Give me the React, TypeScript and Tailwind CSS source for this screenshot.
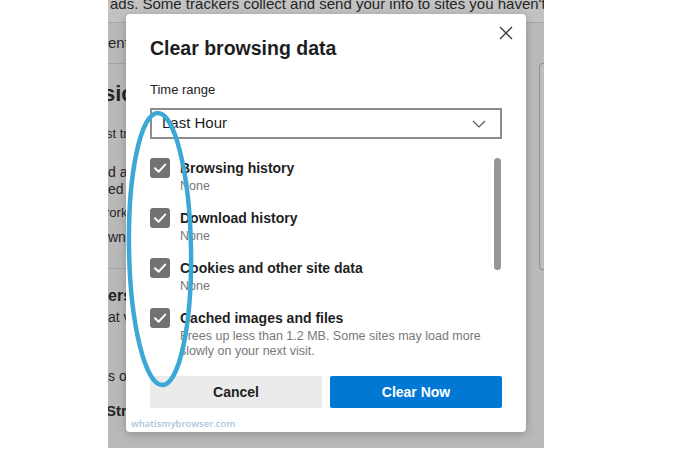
import React from "react";

const Check = () => (
  <svg width="20" height="20" viewBox="0 0 20 20" className="block">
    <path d="M5 10.2 L8.6 13.8 L15.2 6.6" fill="none" stroke="#ffffff" strokeWidth="2" strokeLinecap="round" strokeLinejoin="round" />
  </svg>
);

function Item({ label, sub, last }: { label: string; sub: React.ReactNode; last?: boolean }) {
  return (
    <div className={`flex gap-[10px] ${last ? "" : "h-[50px]"}`}>
      <div className="w-[20px] h-[20px] rounded-[3px] bg-[#727272] shrink-0">
        <Check />
      </div>
      <div className="flex flex-col">
        <div className="text-[14px] leading-[20px] font-semibold text-[#1f1f1f]">{label}</div>
        <div className="text-[12.5px] leading-[15px] text-[#787878] mt-[1px]">{sub}</div>
      </div>
    </div>
  );
}

export default function App() {
  return (
    <div className="relative w-[700px] h-[450px] bg-white overflow-hidden" style={{ fontFamily: '"Liberation Sans", Arial, sans-serif' }}>
      <div className="relative ml-[108px] w-[436px] h-[448px] bg-[#b9b9b9] overflow-hidden">
        {/* background page */}
        <div className="h-[23px] bg-[#c2c2c2] border-b border-[#a8a8a8] overflow-hidden">
          <div className="pl-[2px] mt-[-6px] text-[15px] leading-[20px] text-[#262626] whitespace-nowrap">
            ads. Some trackers collect and send your info to sites you haven't v
          </div>
        </div>
        <div className="flex justify-between">
          <div className="w-[120px] flex flex-col text-[#262626] whitespace-nowrap overflow-hidden">
            <div className="mt-[10px] text-[15px] leading-[20px]">ent</div>
            <div className="mt-[10px] h-px bg-[#a4a4a4]" />
            <div className="mt-[15px] ml-[-5px] text-[22px] leading-[30px] font-bold">sic</div>
            <div className="mt-[15px] ml-[-2px] text-[13px] leading-[20px]">st tr</div>
            <div className="mt-[20px] text-[14px] leading-[17px]">d a</div>
            <div className="text-[14px] leading-[17px]">ed</div>
            <div className="mt-[5px] ml-[-3px] text-[13px] leading-[20px]">rork</div>
            <div className="mt-[4px] text-[14px] leading-[20px]">wn</div>
            <div className="mt-[21px] h-px bg-[#a4a4a4]" />
            <div className="mt-[17px] text-[16px] leading-[20px] font-bold">ers</div>
            <div className="mt-[1px] text-[14px] leading-[20px]">at v</div>
            <div className="mt-[39px] text-[14px] leading-[20px]">s or</div>
            <div className="mt-[15px] ml-[-2px] text-[15px] leading-[20px] font-bold">Stri</div>
          </div>
          <div className="w-[5px] h-[207px] mt-[40px] border-l border-t border-b border-[#8f8f8f] rounded-l-[4px] bg-[#bdbdbd]" />
        </div>

        {/* dialog */}
        <div className="absolute left-[18px] top-[14px] w-[400px] h-[418px] bg-white rounded-[4px] shadow-[0_2px_10px_rgba(0,0,0,0.22)] flex flex-col px-[24px]">
          <div className="flex justify-between items-start mt-[20px]">
            <div className="text-[19.5px] leading-[28px] font-semibold text-[#1e1e1e]">Clear browsing data</div>
            <svg width="14" height="14" viewBox="0 0 14 14" className="mt-[-8px] mr-[-11px]">
              <path d="M1 1 L13 13 M13 1 L1 13" stroke="#3a3a3a" strokeWidth="1.3" fill="none" />
            </svg>
          </div>
          <div className="mt-[19px] text-[13px] leading-[18px] text-[#222]">Time range</div>
          <div className="mt-[9px] h-[31px] w-[352px] border-2 border-[#8c8c8c] flex items-center justify-between pl-[10px] pr-[14px]">
            <span className="text-[15px] text-[#1e1e1e]">Last Hour</span>
            <svg width="14" height="8" viewBox="0 0 14 8">
              <path d="M1 1 L7 7 L13 1" stroke="#555" strokeWidth="1.2" fill="none" />
            </svg>
          </div>
          <div className="mt-[19px] flex justify-between">
            <div className="flex flex-col">
              <Item label="Browsing history" sub="None" />
              <Item label="Download history" sub="None" />
              <Item label="Cookies and other site data" sub="None" />
              <Item
                label="Cached images and files"
                sub={
                  <>
                    Frees up less than 1.2 MB. Some sites may load more
                    <br />
                    slowly on your next visit.
                  </>
                }
                last
              />
            </div>
            <div className="w-[7px] h-[112px] rounded-full bg-[#969696] mr-[1px]" />
          </div>
          <div className="mt-[17px] flex gap-[8px] w-[352px]">
            <div className="flex-1 h-[32px] bg-[#ebebeb] flex items-center justify-center text-[14px] font-semibold text-[#222]">Cancel</div>
            <div className="flex-1 h-[32px] bg-[#0078d4] rounded-[2px] flex items-center justify-center text-[14px] font-bold text-white">Clear Now</div>
          </div>
          <div className="mt-[9px] ml-[-19px] text-[9.5px] leading-[13px] font-semibold text-[#a9c6dd]" style={{ fontFamily: '"Open Sans", sans-serif' }}>
            whatismybrowser.com
          </div>
        </div>
      </div>

      {/* annotation ellipse */}
      <svg className="absolute left-0 top-0 pointer-events-none" width="700" height="450" viewBox="0 0 700 450">
        <ellipse cx="160" cy="249" rx="31" ry="136" transform="rotate(-1 160 249)" fill="none" stroke="#3ba8d6" strokeWidth="4.5" />
      </svg>
    </div>
  );
}
